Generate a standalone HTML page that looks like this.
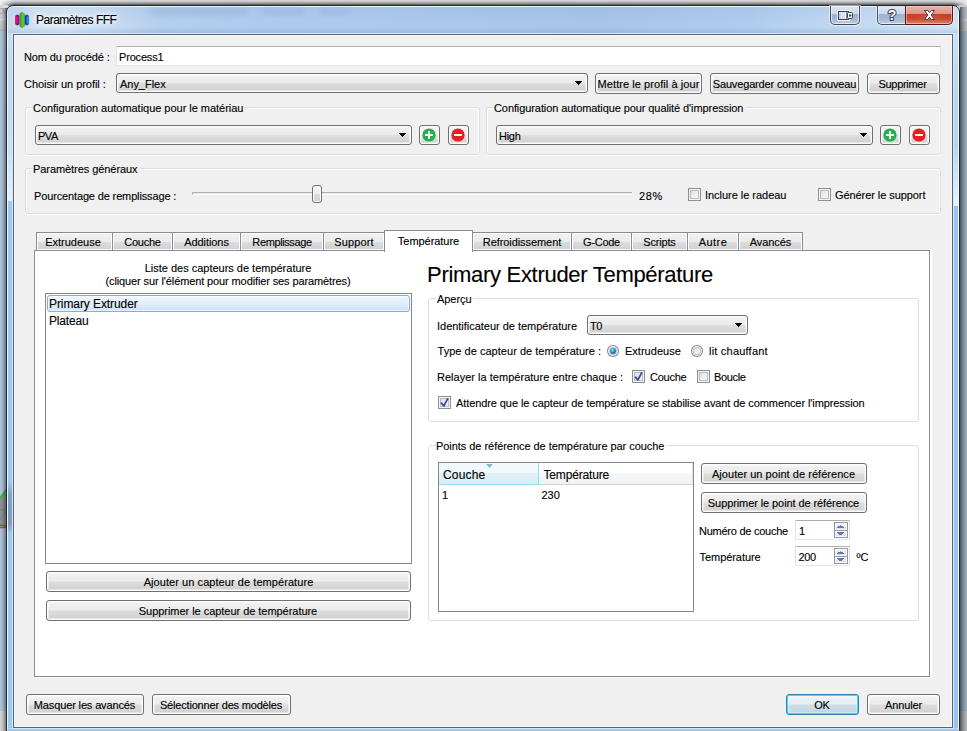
<!DOCTYPE html>
<html lang="fr"><head><meta charset="utf-8"><title>Paramètres FFF</title>
<style>
html,body{margin:0;padding:0;}
body{width:967px;height:731px;overflow:hidden;position:relative;background:#d6d6d6;font-family:"Liberation Sans",sans-serif;}
div,span,svg{position:absolute;}
.t{white-space:nowrap;font-family:"Liberation Sans",sans-serif;-webkit-text-stroke:0.12px #000;}
</style></head><body>
<div style="left:0px;top:0px;width:967px;height:6px;background:linear-gradient(#d9d9d9 0px,#d0d0d0 1px,#bbbbbb 2px,#9d9d9f 3px,#7a7b7f 4px,#55575c 5px);"></div>
<div style="left:0px;top:0px;width:14px;height:6px;background:linear-gradient(90deg,#f4f4f4 0%,rgba(244,244,244,0) 100%);"></div>
<div style="left:953px;top:0px;width:14px;height:6px;background:linear-gradient(270deg,#ececec 0%,rgba(236,236,236,0) 100%);"></div>
<div style="left:0px;top:5px;width:8px;height:15px;background:linear-gradient(#d6d8e2,#cccedb);"></div>
<div style="left:0px;top:19px;width:8px;height:13px;background:linear-gradient(#e4e4e4 0,#cacaca 2px,#bebebe 11px,#98a4b0 12px,#98a4b0 13px);"></div>
<div style="left:0px;top:31px;width:8px;height:681px;background:#b0c6d8;"></div>
<svg style="left:0;top:480px" width="7" height="52" viewBox="0 0 7 52"><path d="M0 18L7 6V48H0z" fill="#8e9296"/><path d="M0 30H7M0 40L7 28" stroke="#7b7f84" stroke-width=".8" fill="none"/><path d="M-1 19L7 9" stroke="#1fcb2c" stroke-width="1.6"/><ellipse cx="1.5" cy="46.5" rx="4" ry="1.3" fill="none" stroke="#e0262c" stroke-width="1.1"/></svg>
<div style="left:0px;top:711px;width:8px;height:20px;background:#d4d4d4;"></div>
<span class="t" style="left:-2px;top:4px;font-size:11px;line-height:13px;color:#b9a680;-webkit-text-stroke:0;">pa</span>
<div style="left:0px;top:8px;width:7px;height:723px;background:linear-gradient(90deg,rgba(30,40,50,0) 0%,rgba(30,40,50,.08) 30%,rgba(30,40,50,.3) 60%,rgba(30,40,50,.62) 100%);"></div>
<div style="left:959px;top:5px;width:8px;height:15px;background:#c9cbd5;"></div>
<div style="left:959px;top:19px;width:8px;height:13px;background:linear-gradient(#e6e6e6 0,#cccccc 3px,#c8c8c8 100%);"></div>
<div style="left:959px;top:31px;width:8px;height:680px;background:#a8bbcb;"></div>
<div style="left:959px;top:711px;width:8px;height:20px;background:#c4c4c4;"></div>
<div style="left:960px;top:7px;width:7px;height:724px;background:linear-gradient(90deg,rgba(20,30,40,.68) 0%,rgba(20,30,40,.42) 30%,rgba(20,30,40,.22) 65%,rgba(20,30,40,.1) 100%);"></div>
<div style="left:6px;top:5px;width:954px;height:731px;box-sizing:border-box;border:1px solid #1f2731;border-radius:7px;background:#9fc9ee;box-shadow:inset 0 0 0 1px #effaff;"></div>
<div style="left:8px;top:7px;width:950px;height:26px;border-radius:5px 5px 0 0;background:linear-gradient(90deg,#c3d5ea 0%,#cfdef0 2.5%,#d6e4f3 6%,#c2d7f0 11%,#aecaeb 16%,#a8c7eb 26%,#a4c4e8 45%,#a0c0e4 62%,#a9c8eb 78%,#bcd4ef 88%,#cfe0f3 100%);"></div>
<div style="left:8px;top:7px;width:950px;height:26px;border-radius:5px 5px 0 0;background:linear-gradient(rgba(150,180,220,.10) 0%,rgba(255,255,255,.06) 45%,rgba(255,255,255,.10) 75%,rgba(110,160,215,.22) 100%);"></div>
<div style="left:8px;top:33px;width:5px;height:168px;background:linear-gradient(#c9dbef 0%,#c0d8f2 35%,#cbdff5 70%,#e6f0fa 100%);"></div>
<div style="left:953px;top:33px;width:5px;height:173px;background:linear-gradient(#cfe0f3 0%,#b9d6f2 35%,#b6d5f3 65%,#e9f2fb 100%);"></div>
<div style="left:953px;top:206px;width:5px;height:522px;background:#99c5eb;"></div>
<div style="left:8px;top:482px;width:4px;height:52px;background:linear-gradient(rgba(110,130,155,0) 0%,rgba(110,130,155,.55) 25%,rgba(110,130,155,.6) 80%,rgba(110,130,155,0) 100%);"></div>
<div style="left:150px;top:9px;width:96px;height:6px;background:rgba(110,140,185,.20);filter:blur(2.5px);"></div>
<div style="left:262px;top:9px;width:40px;height:6px;background:rgba(110,140,185,.18);filter:blur(2.5px);"></div>
<div style="left:320px;top:9px;width:28px;height:6px;background:rgba(110,140,185,.16);filter:blur(2.5px);"></div>
<div style="left:8px;top:728px;width:950px;height:3px;background:linear-gradient(#d5e7fa 0px,#a2c5e8 1px);"></div>
<div style="left:12px;top:33px;width:942px;height:696px;box-sizing:border-box;border:1px solid #d6e9fc;"></div>
<div style="left:13px;top:34px;width:940px;height:694px;box-sizing:border-box;border:1px solid #526477;background:#f0f0f0;box-shadow:inset 0 0 0 1px #f9f9f9;"></div>
<svg style="left:14px;top:11px" width="16" height="18" viewBox="0 0 16 18">
<defs>
<linearGradient id="gp" x1="0" x2="1" y1="0" y2="0"><stop offset="0" stop-color="#d4127a"/><stop offset=".3" stop-color="#f6067a"/><stop offset=".7" stop-color="#a3158a"/><stop offset="1" stop-color="#4f1c8e"/></linearGradient>
<linearGradient id="gg" x1="0" x2="1" y1="0" y2="0"><stop offset="0" stop-color="#2b9c3a"/><stop offset=".3" stop-color="#45ae34"/><stop offset=".68" stop-color="#7cc52a"/><stop offset="1" stop-color="#2a9a3c"/></linearGradient>
<linearGradient id="gb" x1="0" x2="1" y1="0" y2="0"><stop offset="0" stop-color="#2c1c98"/><stop offset=".3" stop-color="#1f3fb8"/><stop offset=".72" stop-color="#1aa6f2"/><stop offset="1" stop-color="#2a74d4"/></linearGradient>
<linearGradient id="gv" x1="0" x2="0" y1="0" y2="1"><stop offset="0" stop-color="#201060" stop-opacity=".45"/><stop offset=".25" stop-color="#201060" stop-opacity="0"/><stop offset=".75" stop-color="#201060" stop-opacity="0"/><stop offset="1" stop-color="#201060" stop-opacity=".45"/></linearGradient>
</defs>
<path d="M3.25 3.3L4.3 4.3H2.2ZM3.25 14.7L4.3 13.7H2.2ZM12.85 3.3L13.9 4.3H11.8ZM12.85 14.7L13.9 13.7H11.8Z" fill="#5a2090"/>
<rect x="1.1" y="4" width="4.5" height="10" rx="1.7" fill="url(#gp)"/><rect x="1.1" y="4" width="4.5" height="10" rx="1.7" fill="url(#gv)"/>
<rect x="10.6" y="4" width="4.5" height="10" rx="1.7" fill="url(#gb)"/><rect x="10.6" y="4" width="4.5" height="10" rx="1.7" fill="url(#gv)"/>
<path d="M8.1 0.9L9.4 2.1H6.8ZM8.1 17.1L9.4 15.9H6.8Z" fill="#2f9f3a"/>
<rect x="5.4" y="1.6" width="5.4" height="14.8" rx="2.2" fill="url(#gg)"/>
</svg>
<span id="t1" class="t" style="left:36px;top:13px;font-size:12px;line-height:14px;color:#000;letter-spacing:-0.497px;text-shadow:0 0 4px #fff,0 0 6px #fff,0 0 8px rgba(255,255,255,.9);">Paramètres FFF</span>
<div style="left:830px;top:6px;width:30px;height:19px;box-sizing:border-box;border:1px solid #3f4b5b;border-top:none;box-shadow:0 0 0 1px rgba(255,255,255,.55), inset 0 0 0 1px rgba(255,255,255,.6);border-radius:0 0 5px 5px;background:linear-gradient(#dde7f3 0%,#c9d7e9 46%,#9db2cf 47%,#a6bad6 75%,#bccfe6 100%);"></div>
<svg style="left:837px;top:10px" width="17" height="11" viewBox="0 0 17 11">
<rect x=".5" y=".5" width="12" height="10" fill="none" stroke="#fff" stroke-opacity=".8"/>
<rect x="1.5" y="1.5" width="10" height="8" fill="#c9d5e6" stroke="#3c3f55"/>
<path d="M4.5 2v7M6.5 2v7" stroke="#eef3f9"/><path d="M8.5 2v7" stroke="#fff"/><path d="M9.5 2v7" stroke="#7d879c"/>
<rect x="10.5" y="2.5" width="5" height="6" rx="1" fill="#fff" stroke="#3c3f55"/><rect x="12" y="4.5" width="2.4" height="2" fill="#3c3f55"/></svg>
<div style="left:877px;top:6px;width:29px;height:19px;box-sizing:border-box;border:1px solid #3f4b5b;border-top:none;border-right:none;box-shadow:-1px 0 0 0 rgba(255,255,255,.55),0 1px 0 0 rgba(255,255,255,.55), inset 1px 0 0 0 rgba(255,255,255,.6), inset 0 -1px 0 0 rgba(255,255,255,.6);border-radius:0 0 0 5px;background:linear-gradient(#dde7f3 0%,#c9d7e9 46%,#9db2cf 47%,#a6bad6 75%,#bccfe6 100%);"></div>
<svg style="left:882px;top:6px" width="20" height="18" viewBox="0 0 20 18"><text x="10" y="14" text-anchor="middle" font-family="Liberation Sans, sans-serif" font-weight="bold" font-size="14" fill="#fff" stroke="#3a3f55" stroke-width="2" stroke-linejoin="round" paint-order="stroke">?</text></svg>
<div style="left:905px;top:6px;width:48px;height:19px;box-sizing:border-box;border:1px solid #5c160d;border-top:none;border-radius:0 0 5px 0;box-shadow:0 1px 0 0 rgba(255,255,255,.5),1px 0 0 0 rgba(255,255,255,.5), inset 0 0 0 1px rgba(255,210,200,.55);background:linear-gradient(#efb3a8 0%,#de9083 46%,#c23f2a 47%,#c8442e 70%,#da8a6b 100%);"></div>
<div style="left:912px;top:15px;width:34px;height:8px;background:radial-gradient(ellipse at 50% 20%,rgba(235,95,60,.55) 0%,rgba(235,95,60,0) 70%);"></div>
<svg style="left:923px;top:9px" width="13" height="12" viewBox="0 0 13 12"><path d="M1.5 1.5H4.7L6.5 3.7L8.3 1.5H11.5L8.2 6L11.5 10.5H8.3L6.5 8.3L4.7 10.5H1.5L4.8 6Z" fill="#fff" stroke="#3c3f55" stroke-width="1" stroke-linejoin="round"/></svg>
<span id="t2" class="t" style="left:24px;top:51px;font-size:11px;line-height:13px;color:#000;letter-spacing:-0.115px;">Nom du procédé :</span>
<div style="left:116px;top:46px;width:825px;height:20px;box-sizing:border-box;border-radius:1px;border:1px solid #e3e9ef;border-top-color:#abadb3;border-left-color:#e2e3ea;border-right-color:#dbdfe6;background:#fff;"></div>
<span id="t3" class="t" style="left:119px;top:51px;font-size:11px;line-height:13px;color:#000;letter-spacing:-0.182px;">Process1</span>
<span id="t4" class="t" style="left:24px;top:78px;font-size:11px;line-height:13px;color:#000;letter-spacing:-0.039px;">Choisir un profil :</span>
<div style="left:116px;top:73px;width:472px;height:20px;box-sizing:border-box;border:1px solid #707070;border-radius:3px;box-shadow:inset 0 0 0 1px #fcfcfc, inset 0 0 0 2px rgba(255,255,255,.45);background:linear-gradient(#f2f2f2 0%,#ebebeb 48%,#dddddd 52%,#cfcfcf 100%);"></div>
<svg style="left:575px;top:81px" width="7" height="4" viewBox="0 0 7 4" shape-rendering="crispEdges"><path d="M0 0h7v1h-7zM1 1h5v1h-5zM2 2h3v1h-3zM3 3h1v1h-1z" fill="#000"/></svg>
<span id="t5" class="t" style="left:120px;top:78px;font-size:11px;line-height:13px;color:#000;letter-spacing:-0.032px;">Any_Flex</span>
<div style="left:595px;top:73px;width:107px;height:21px;box-sizing:border-box;border:1px solid #707070;border-radius:3px;box-shadow:inset 0 0 0 1px #fcfcfc, inset 0 0 0 2px rgba(255,255,255,.45);background:linear-gradient(#f2f2f2 0%,#ebebeb 48%,#dddddd 52%,#cfcfcf 100%);"></div>
<span id="t6" class="t" style="left:648.5px;transform:translateX(-50%);top:78px;font-size:11px;line-height:13px;color:#000;letter-spacing:0.067px;">Mettre le profil à jour</span>
<div style="left:710px;top:73px;width:149px;height:21px;box-sizing:border-box;border:1px solid #707070;border-radius:3px;box-shadow:inset 0 0 0 1px #fcfcfc, inset 0 0 0 2px rgba(255,255,255,.45);background:linear-gradient(#f2f2f2 0%,#ebebeb 48%,#dddddd 52%,#cfcfcf 100%);"></div>
<span id="t7" class="t" style="left:784.5px;transform:translateX(-50%);top:78px;font-size:11px;line-height:13px;color:#000;letter-spacing:-0.155px;">Sauvegarder comme nouveau</span>
<div style="left:867px;top:73px;width:73px;height:21px;box-sizing:border-box;border:1px solid #707070;border-radius:3px;box-shadow:inset 0 0 0 1px #fcfcfc, inset 0 0 0 2px rgba(255,255,255,.45);background:linear-gradient(#f2f2f2 0%,#ebebeb 48%,#dddddd 52%,#cfcfcf 100%);"></div>
<span id="t8" class="t" style="left:902.5px;transform:translateX(-50%);top:78px;font-size:11px;line-height:13px;color:#000;letter-spacing:-0.294px;">Supprimer</span>
<div style="left:25px;top:107px;width:455px;height:48px;box-sizing:border-box;border:1px solid #d5dfe5;border-radius:3px;box-shadow:inset 1px 1px 0 0 #fff, inset -1px 0 0 0 #fff, 0 1px 0 0 #fff;"></div>
<div style="left:33px;top:107px;width:212px;height:2px;background:#f0f0f0;"></div>
<span id="t9" class="t" style="left:33px;top:102px;font-size:11px;line-height:13px;color:#000;letter-spacing:-0.028px;">Configuration automatique pour le matériau</span>
<div style="left:35px;top:125px;width:377px;height:20px;box-sizing:border-box;border:1px solid #707070;border-radius:3px;box-shadow:inset 0 0 0 1px #fcfcfc, inset 0 0 0 2px rgba(255,255,255,.45);background:linear-gradient(#f2f2f2 0%,#ebebeb 48%,#dddddd 52%,#cfcfcf 100%);"></div>
<svg style="left:399px;top:133px" width="7" height="4" viewBox="0 0 7 4" shape-rendering="crispEdges"><path d="M0 0h7v1h-7zM1 1h5v1h-5zM2 2h3v1h-3zM3 3h1v1h-1z" fill="#000"/></svg>
<span id="t10" class="t" style="left:38px;top:130px;font-size:11px;line-height:13px;color:#000;letter-spacing:-0.468px;">PVA</span>
<div style="left:419px;top:125px;width:21px;height:20px;box-sizing:border-box;border:1px solid #707070;border-radius:3px;box-shadow:inset 0 0 0 1px #fcfcfc, inset 0 0 0 2px rgba(255,255,255,.45);background:linear-gradient(#f2f2f2 0%,#ebebeb 48%,#dddddd 52%,#cfcfcf 100%);"></div>
<svg style="left:422px;top:128px" width="14" height="14" viewBox="0 0 14 14"><circle cx="7" cy="7" r="6.6" fill="#22b14c"/><path d="M6 3h2v3h3v2h-3v3h-2v-3h-3v-2h3z" fill="#fff"/></svg>
<div style="left:448px;top:125px;width:21px;height:20px;box-sizing:border-box;border:1px solid #707070;border-radius:3px;box-shadow:inset 0 0 0 1px #fcfcfc, inset 0 0 0 2px rgba(255,255,255,.45);background:linear-gradient(#f2f2f2 0%,#ebebeb 48%,#dddddd 52%,#cfcfcf 100%);"></div>
<svg style="left:451px;top:128px" width="14" height="14" viewBox="0 0 14 14"><circle cx="7" cy="7" r="6.6" fill="#ed1c24"/><path d="M3 6h8v2h-8z" fill="#fff"/></svg>
<div style="left:486px;top:107px;width:455px;height:48px;box-sizing:border-box;border:1px solid #d5dfe5;border-radius:3px;box-shadow:inset 1px 1px 0 0 #fff, inset -1px 0 0 0 #fff, 0 1px 0 0 #fff;"></div>
<div style="left:494px;top:107px;width:252px;height:2px;background:#f0f0f0;"></div>
<span id="t11" class="t" style="left:494px;top:102px;font-size:11px;line-height:13px;color:#000;letter-spacing:-0.091px;">Configuration automatique pour qualité d'impression</span>
<div style="left:496px;top:125px;width:377px;height:20px;box-sizing:border-box;border:1px solid #707070;border-radius:3px;box-shadow:inset 0 0 0 1px #fcfcfc, inset 0 0 0 2px rgba(255,255,255,.45);background:linear-gradient(#f2f2f2 0%,#ebebeb 48%,#dddddd 52%,#cfcfcf 100%);"></div>
<svg style="left:860px;top:133px" width="7" height="4" viewBox="0 0 7 4" shape-rendering="crispEdges"><path d="M0 0h7v1h-7zM1 1h5v1h-5zM2 2h3v1h-3zM3 3h1v1h-1z" fill="#000"/></svg>
<span id="t12" class="t" style="left:499px;top:130px;font-size:11px;line-height:13px;color:#000;letter-spacing:-0.281px;">High</span>
<div style="left:880px;top:125px;width:21px;height:20px;box-sizing:border-box;border:1px solid #707070;border-radius:3px;box-shadow:inset 0 0 0 1px #fcfcfc, inset 0 0 0 2px rgba(255,255,255,.45);background:linear-gradient(#f2f2f2 0%,#ebebeb 48%,#dddddd 52%,#cfcfcf 100%);"></div>
<svg style="left:883px;top:128px" width="14" height="14" viewBox="0 0 14 14"><circle cx="7" cy="7" r="6.6" fill="#22b14c"/><path d="M6 3h2v3h3v2h-3v3h-2v-3h-3v-2h3z" fill="#fff"/></svg>
<div style="left:909px;top:125px;width:21px;height:20px;box-sizing:border-box;border:1px solid #707070;border-radius:3px;box-shadow:inset 0 0 0 1px #fcfcfc, inset 0 0 0 2px rgba(255,255,255,.45);background:linear-gradient(#f2f2f2 0%,#ebebeb 48%,#dddddd 52%,#cfcfcf 100%);"></div>
<svg style="left:912px;top:128px" width="14" height="14" viewBox="0 0 14 14"><circle cx="7" cy="7" r="6.6" fill="#ed1c24"/><path d="M3 6h8v2h-8z" fill="#fff"/></svg>
<div style="left:25px;top:168px;width:916px;height:46px;box-sizing:border-box;border:1px solid #d5dfe5;border-radius:3px;box-shadow:inset 1px 1px 0 0 #fff, inset -1px 0 0 0 #fff, 0 1px 0 0 #fff;"></div>
<div style="left:33px;top:168px;width:107px;height:2px;background:#f0f0f0;"></div>
<span id="t13" class="t" style="left:33px;top:163px;font-size:11px;line-height:13px;color:#000;letter-spacing:-0.067px;">Paramètres généraux</span>
<span id="t14" class="t" style="left:34px;top:190px;font-size:11px;line-height:13px;color:#000;letter-spacing:-0.141px;">Pourcentage de remplissage :</span>
<div style="left:192px;top:192px;width:440px;height:3px;box-sizing:border-box;background:#e7eaea;border-top:1px solid #b0b0b0;border-left:1px solid #b0b0b0;border-bottom:1px solid #fcfcfc;"></div>
<div style="left:312px;top:185px;width:10px;height:18px;box-sizing:border-box;border:1px solid #707070;border-radius:3px;box-shadow:inset 0 0 0 1px #fcfcfc;background:linear-gradient(#f4f4f4 0%,#efefef 48%,#dcdcdc 52%,#d2d2d2 100%);"></div>
<span id="t15" class="t" style="left:639px;top:190px;font-size:11px;line-height:13px;color:#000;letter-spacing:0.59px;">28%</span>
<div style="left:688px;top:188px;width:13px;height:13px;box-sizing:border-box;border:1px solid #8e8f8f;background:#f4f4f4;box-shadow:inset 0 0 0 1px #f4f4f4, inset 0 0 0 2px #b9bcc0;background:linear-gradient(135deg,#d6d9dc 0%,#eceef0 50%,#fbfbfc 100%);"></div>
<span id="t16" class="t" style="left:705px;top:189px;font-size:11px;line-height:13px;color:#000;letter-spacing:-0.033px;">Inclure le radeau</span>
<div style="left:818px;top:188px;width:13px;height:13px;box-sizing:border-box;border:1px solid #8e8f8f;background:#f4f4f4;box-shadow:inset 0 0 0 1px #f4f4f4, inset 0 0 0 2px #b9bcc0;background:linear-gradient(135deg,#d6d9dc 0%,#eceef0 50%,#fbfbfc 100%);"></div>
<span id="t17" class="t" style="left:835px;top:189px;font-size:11px;line-height:13px;color:#000;letter-spacing:-0.073px;">Générer le support</span>
<div style="left:34px;top:250px;width:896px;height:427px;box-sizing:border-box;border:1px solid #898c95;background:#fff;"></div>
<div style="left:930px;top:250px;width:2px;height:428px;background:#fff;"></div>
<div style="left:35px;top:677px;width:897px;height:1px;background:#fff;"></div>
<div style="left:36px;top:232px;width:77px;height:19px;box-sizing:border-box;border:1px solid #898c95;box-shadow:inset 0 0 0 1px #fcfcfc;background:linear-gradient(#f2f2f2 0%,#ebebeb 50%,#dddddd 53%,#cfcfcf 100%);"></div>
<span id="t18" class="t" style="left:73.0px;transform:translateX(-50%);top:236px;font-size:11px;line-height:13px;color:#000;letter-spacing:-0.006px;">Extrudeuse</span>
<div style="left:112px;top:232px;width:61px;height:19px;box-sizing:border-box;border:1px solid #898c95;box-shadow:inset 0 0 0 1px #fcfcfc;background:linear-gradient(#f2f2f2 0%,#ebebeb 50%,#dddddd 53%,#cfcfcf 100%);"></div>
<span id="t19" class="t" style="left:142.5px;transform:translateX(-50%);top:236px;font-size:11px;line-height:13px;color:#000;letter-spacing:-0.237px;">Couche</span>
<div style="left:172px;top:232px;width:69px;height:19px;box-sizing:border-box;border:1px solid #898c95;box-shadow:inset 0 0 0 1px #fcfcfc;background:linear-gradient(#f2f2f2 0%,#ebebeb 50%,#dddddd 53%,#cfcfcf 100%);"></div>
<span id="t20" class="t" style="left:206.5px;transform:translateX(-50%);top:236px;font-size:11px;line-height:13px;color:#000;letter-spacing:-0.063px;">Additions</span>
<div style="left:240px;top:232px;width:84px;height:19px;box-sizing:border-box;border:1px solid #898c95;box-shadow:inset 0 0 0 1px #fcfcfc;background:linear-gradient(#f2f2f2 0%,#ebebeb 50%,#dddddd 53%,#cfcfcf 100%);"></div>
<span id="t21" class="t" style="left:282.0px;transform:translateX(-50%);top:236px;font-size:11px;line-height:13px;color:#000;letter-spacing:-0.39px;">Remplissage</span>
<div style="left:323px;top:232px;width:62px;height:19px;box-sizing:border-box;border:1px solid #898c95;box-shadow:inset 0 0 0 1px #fcfcfc;background:linear-gradient(#f2f2f2 0%,#ebebeb 50%,#dddddd 53%,#cfcfcf 100%);"></div>
<span id="t22" class="t" style="left:354.0px;transform:translateX(-50%);top:236px;font-size:11px;line-height:13px;color:#000;letter-spacing:0.153px;">Support</span>
<div style="left:472px;top:232px;width:100px;height:19px;box-sizing:border-box;border:1px solid #898c95;box-shadow:inset 0 0 0 1px #fcfcfc;background:linear-gradient(#f2f2f2 0%,#ebebeb 50%,#dddddd 53%,#cfcfcf 100%);"></div>
<span id="t23" class="t" style="left:522.0px;transform:translateX(-50%);top:236px;font-size:11px;line-height:13px;color:#000;letter-spacing:-0.072px;">Refroidissement</span>
<div style="left:571px;top:232px;width:61px;height:19px;box-sizing:border-box;border:1px solid #898c95;box-shadow:inset 0 0 0 1px #fcfcfc;background:linear-gradient(#f2f2f2 0%,#ebebeb 50%,#dddddd 53%,#cfcfcf 100%);"></div>
<span id="t24" class="t" style="left:601.5px;transform:translateX(-50%);top:236px;font-size:11px;line-height:13px;color:#000;letter-spacing:-0.289px;">G-Code</span>
<div style="left:631px;top:232px;width:57px;height:19px;box-sizing:border-box;border:1px solid #898c95;box-shadow:inset 0 0 0 1px #fcfcfc;background:linear-gradient(#f2f2f2 0%,#ebebeb 50%,#dddddd 53%,#cfcfcf 100%);"></div>
<span id="t25" class="t" style="left:659.5px;transform:translateX(-50%);top:236px;font-size:11px;line-height:13px;color:#000;letter-spacing:-0.175px;">Scripts</span>
<div style="left:687px;top:232px;width:52px;height:19px;box-sizing:border-box;border:1px solid #898c95;box-shadow:inset 0 0 0 1px #fcfcfc;background:linear-gradient(#f2f2f2 0%,#ebebeb 50%,#dddddd 53%,#cfcfcf 100%);"></div>
<span id="t26" class="t" style="left:713.0px;transform:translateX(-50%);top:236px;font-size:11px;line-height:13px;color:#000;letter-spacing:0.401px;">Autre</span>
<div style="left:738px;top:232px;width:65px;height:19px;box-sizing:border-box;border:1px solid #898c95;box-shadow:inset 0 0 0 1px #fcfcfc;background:linear-gradient(#f2f2f2 0%,#ebebeb 50%,#dddddd 53%,#cfcfcf 100%);"></div>
<span id="t27" class="t" style="left:770.5px;transform:translateX(-50%);top:236px;font-size:11px;line-height:13px;color:#000;letter-spacing:-0.086px;">Avancés</span>
<div style="left:384px;top:230px;width:89px;height:22px;box-sizing:border-box;border:1px solid #898c95;border-bottom:none;background:#fff;"></div>
<span id="t28" class="t" style="left:428.5px;transform:translateX(-50%);top:235px;font-size:11px;line-height:13px;color:#000;letter-spacing:-0.042px;">Température</span>
<span id="t29" class="t" style="left:228px;transform:translateX(-50%);top:262px;font-size:11px;line-height:13px;color:#000;letter-spacing:-0.01px;">Liste des capteurs de température</span>
<span id="t30" class="t" style="left:228px;transform:translateX(-50%);top:275px;font-size:11px;line-height:13px;color:#000;letter-spacing:-0.114px;">(cliquer sur l'élément pour modifier ses paramètres)</span>
<div style="left:45px;top:293px;width:367px;height:271px;box-sizing:border-box;border:1px solid #828790;background:#fff;"></div>
<div style="left:47px;top:295px;width:363px;height:17px;box-sizing:border-box;border:1px solid #84acdd;border-radius:3px;box-shadow:inset 0 0 0 1px rgba(255,255,255,.6);background:linear-gradient(#f1f7fe,#cfe3fc);"></div>
<span id="t31" class="t" style="left:49px;top:297px;font-size:12px;line-height:14px;color:#000;letter-spacing:-0.083px;">Primary Extruder</span>
<span id="t32" class="t" style="left:49px;top:314px;font-size:12px;line-height:14px;color:#000;letter-spacing:-0.172px;">Plateau</span>
<div style="left:46px;top:571px;width:365px;height:21px;box-sizing:border-box;border:1px solid #707070;border-radius:3px;box-shadow:inset 0 0 0 1px #fcfcfc, inset 0 0 0 2px rgba(255,255,255,.45);background:linear-gradient(#f2f2f2 0%,#ebebeb 48%,#dddddd 52%,#cfcfcf 100%);"></div>
<span id="t33" class="t" style="left:228.5px;transform:translateX(-50%);top:576px;font-size:11px;line-height:13px;color:#000;letter-spacing:0.065px;">Ajouter un capteur de température</span>
<div style="left:46px;top:600px;width:365px;height:21px;box-sizing:border-box;border:1px solid #707070;border-radius:3px;box-shadow:inset 0 0 0 1px #fcfcfc, inset 0 0 0 2px rgba(255,255,255,.45);background:linear-gradient(#f2f2f2 0%,#ebebeb 48%,#dddddd 52%,#cfcfcf 100%);"></div>
<span id="t34" class="t" style="left:228px;transform:translateX(-50%);top:605px;font-size:11px;line-height:13px;color:#000;letter-spacing:-0.039px;">Supprimer le capteur de température</span>
<span id="t35" class="t" style="left:427px;top:262px;font-size:22px;line-height:25px;color:#000;letter-spacing:-0.295px;">Primary Extruder Température</span>
<div style="left:428px;top:298px;width:491px;height:124px;box-sizing:border-box;border:1px solid #d5dfe5;border-radius:3px;box-shadow:inset 1px 1px 0 0 #fff, inset -1px 0 0 0 #fff, 0 1px 0 0 #fff;"></div>
<div style="left:436px;top:298px;width:37px;height:2px;background:#fff;"></div>
<span id="t36" class="t" style="left:437px;top:293px;font-size:11px;line-height:13px;color:#000;letter-spacing:-0.06px;">Aperçu</span>
<span id="t37" class="t" style="left:437px;top:320px;font-size:11px;line-height:13px;color:#000;letter-spacing:-0.022px;">Identificateur de température</span>
<div style="left:587px;top:315px;width:161px;height:20px;box-sizing:border-box;border:1px solid #707070;border-radius:3px;box-shadow:inset 0 0 0 1px #fcfcfc, inset 0 0 0 2px rgba(255,255,255,.45);background:linear-gradient(#f2f2f2 0%,#ebebeb 48%,#dddddd 52%,#cfcfcf 100%);"></div>
<svg style="left:735px;top:323px" width="7" height="4" viewBox="0 0 7 4" shape-rendering="crispEdges"><path d="M0 0h7v1h-7zM1 1h5v1h-5zM2 2h3v1h-3zM3 3h1v1h-1z" fill="#000"/></svg>
<span id="t38" class="t" style="left:590px;top:320px;font-size:11px;line-height:13px;color:#000;letter-spacing:-0.422px;">T0</span>
<span id="t39" class="t" style="left:437.5px;top:345px;font-size:11px;line-height:13px;color:#000;letter-spacing:0.029px;">Type de capteur de température :</span>
<div style="left:607px;top:345px;width:12px;height:12px;border-radius:50%;box-shadow:inset 0 0 0 1px #8e8f8f, inset 0 0 0 2px #f0f0f0, inset 0 0 0 3px #c0c4c8;background:linear-gradient(135deg,#d6d9dc 0%,#eceef0 50%,#fbfbfc 100%);"><div style="left:3px;top:3px;width:6px;height:6px;border-radius:50%;background:radial-gradient(circle at 40% 35%,#a8e6fb 0%,#2aa2e2 35%,#15629f 70%,#0c3a6b 100%);"></div></div>
<span id="t40" class="t" style="left:625px;top:345px;font-size:11px;line-height:13px;color:#000;letter-spacing:0.014px;">Extrudeuse</span>
<div style="left:691px;top:345px;width:12px;height:12px;border-radius:50%;box-shadow:inset 0 0 0 1px #8e8f8f, inset 0 0 0 2px #f0f0f0, inset 0 0 0 3px #c0c4c8;background:linear-gradient(135deg,#d6d9dc 0%,#eceef0 50%,#fbfbfc 100%);"></div>
<span id="t41" class="t" style="left:709px;top:345px;font-size:11px;line-height:13px;color:#000;letter-spacing:0.211px;">lit chauffant</span>
<span id="t42" class="t" style="left:437px;top:371px;font-size:11px;line-height:13px;color:#000;letter-spacing:0.019px;">Relayer la température entre chaque :</span>
<div style="left:632px;top:370px;width:13px;height:13px;box-sizing:border-box;border:1px solid #8e8f8f;background:#f4f4f4;box-shadow:inset 0 0 0 1px #f4f4f4, inset 0 0 0 2px #b9bcc0;background:linear-gradient(135deg,#d6d9dc 0%,#eceef0 50%,#fbfbfc 100%);"><svg width="13" height="13" viewBox="0 0 13 13" style="left:-1px;top:-1px"><path d="M3.5 7.1 L5.9 9.9 L9.6 2.9" fill="none" stroke="#3a4c9a" stroke-width="1.8" stroke-linecap="round" stroke-linejoin="round"/></svg></div>
<span id="t43" class="t" style="left:650px;top:371px;font-size:11px;line-height:13px;color:#000;letter-spacing:-0.254px;">Couche</span>
<div style="left:697px;top:370px;width:13px;height:13px;box-sizing:border-box;border:1px solid #8e8f8f;background:#f4f4f4;box-shadow:inset 0 0 0 1px #f4f4f4, inset 0 0 0 2px #b9bcc0;background:linear-gradient(135deg,#d6d9dc 0%,#eceef0 50%,#fbfbfc 100%);"></div>
<span id="t44" class="t" style="left:714px;top:371px;font-size:11px;line-height:13px;color:#000;letter-spacing:-0.357px;">Boucle</span>
<div style="left:438px;top:396px;width:13px;height:13px;box-sizing:border-box;border:1px solid #8e8f8f;background:#f4f4f4;box-shadow:inset 0 0 0 1px #f4f4f4, inset 0 0 0 2px #b9bcc0;background:linear-gradient(135deg,#d6d9dc 0%,#eceef0 50%,#fbfbfc 100%);"><svg width="13" height="13" viewBox="0 0 13 13" style="left:-1px;top:-1px"><path d="M3.5 7.1 L5.9 9.9 L9.6 2.9" fill="none" stroke="#3a4c9a" stroke-width="1.8" stroke-linecap="round" stroke-linejoin="round"/></svg></div>
<span id="t45" class="t" style="left:456px;top:397px;font-size:11px;line-height:13px;color:#000;letter-spacing:-0.09px;">Attendre que le capteur de température se stabilise avant de commencer l'impression</span>
<div style="left:428px;top:445px;width:491px;height:176px;box-sizing:border-box;border:1px solid #d5dfe5;border-radius:3px;box-shadow:inset 1px 1px 0 0 #fff, inset -1px 0 0 0 #fff, 0 1px 0 0 #fff;"></div>
<div style="left:436px;top:445px;width:231px;height:2px;background:#fff;"></div>
<span id="t46" class="t" style="left:436px;top:440px;font-size:11px;line-height:13px;color:#000;letter-spacing:-0.047px;">Points de référence de température par couche</span>
<div style="left:438px;top:462px;width:256px;height:150px;box-sizing:border-box;border:1px solid #828790;background:#fff;"></div>
<div style="left:439px;top:463px;width:254px;height:21px;background:linear-gradient(#ffffff 0%,#ffffff 45%,#f7f8fa 50%,#f1f2f4 100%);border-bottom:1px solid #d5d5d5;"></div>
<div style="left:439px;top:463px;width:100px;height:22px;box-sizing:border-box;border-right:1px solid #96d9f9;border-bottom:1px solid #96d9f9;background:linear-gradient(#f2f9fc 0%,#f2f9fc 45%,#e1f1f9 50%,#d8ecf6 100%);"></div>
<svg style="left:486px;top:464px" width="7" height="4" viewBox="0 0 7 4"><path d="M0 0h7L3.5 4z" fill="#86b7d5"/></svg>
<div style="left:692px;top:463px;width:1px;height:20px;background:#e0e3e8;"></div>
<span id="t47" class="t" style="left:443px;top:468px;font-size:12px;line-height:14px;color:#000;letter-spacing:0.171px;">Couche</span>
<span id="t48" class="t" style="left:543.5px;top:468px;font-size:12px;line-height:14px;color:#000;letter-spacing:-0.161px;">Température</span>
<span id="t49" class="t" style="left:442px;top:489px;font-size:11px;line-height:13px;color:#000;letter-spacing:0px;">1</span>
<span id="t50" class="t" style="left:541.5px;top:489px;font-size:11px;line-height:13px;color:#000;letter-spacing:-0.02px;">230</span>
<div style="left:701px;top:463px;width:166px;height:21px;box-sizing:border-box;border:1px solid #707070;border-radius:3px;box-shadow:inset 0 0 0 1px #fcfcfc, inset 0 0 0 2px rgba(255,255,255,.45);background:linear-gradient(#f2f2f2 0%,#ebebeb 48%,#dddddd 52%,#cfcfcf 100%);"></div>
<span id="t51" class="t" style="left:783.5px;transform:translateX(-50%);top:468px;font-size:11px;line-height:13px;color:#000;letter-spacing:0.042px;">Ajouter un point de référence</span>
<div style="left:701px;top:492px;width:166px;height:21px;box-sizing:border-box;border:1px solid #707070;border-radius:3px;box-shadow:inset 0 0 0 1px #fcfcfc, inset 0 0 0 2px rgba(255,255,255,.45);background:linear-gradient(#f2f2f2 0%,#ebebeb 48%,#dddddd 52%,#cfcfcf 100%);"></div>
<span id="t52" class="t" style="left:783.5px;transform:translateX(-50%);top:497px;font-size:11px;line-height:13px;color:#000;letter-spacing:-0.09px;">Supprimer le point de référence</span>
<span id="t53" class="t" style="left:699px;top:525px;font-size:11px;line-height:13px;color:#000;letter-spacing:-0.253px;">Numéro de couche</span>
<div style="left:795px;top:520px;width:55px;height:20px;box-sizing:border-box;border:1px solid #e3e9ef;border-top-color:#abadb3;border-left-color:#e2e3ea;border-right-color:#dbdfe6;background:#fff;"></div>
<div style="left:834px;top:522px;width:14px;height:9px;box-sizing:border-box;border:1px solid #96979c;box-shadow:inset 0 0 0 1px #fafafa;background:linear-gradient(#f6f6f6,#dcdcdc);"></div>
<div style="left:834px;top:530px;width:14px;height:8px;box-sizing:border-box;border:1px solid #96979c;box-shadow:inset 0 0 0 1px #fafafa;background:linear-gradient(#f6f6f6,#dcdcdc);"></div>
<svg style="left:837px;top:525px" width="7" height="3" viewBox="0 0 7 3" shape-rendering="crispEdges"><path d="M3 0h1v1h-1z" fill="#8d9ad0"/><path d="M2 0.5h3v0.5h-3zM1 1h5v1h-5zM0 2h7v1h-7z" fill="#6073bd"/></svg>
<svg style="left:837px;top:532px" width="7" height="3" viewBox="0 0 7 3" shape-rendering="crispEdges"><path d="M0 0h7v1h-7zM1 1h5v1h-5zM2 2h3v1h-3z" fill="#6073bd"/></svg>
<span id="t54" class="t" style="left:799px;top:525px;font-size:11px;line-height:13px;color:#000;letter-spacing:0px;">1</span>
<span id="t55" class="t" style="left:699.5px;top:551px;font-size:11px;line-height:13px;color:#000;letter-spacing:-0.051px;">Température</span>
<div style="left:795px;top:546px;width:55px;height:20px;box-sizing:border-box;border:1px solid #e3e9ef;border-top-color:#abadb3;border-left-color:#e2e3ea;border-right-color:#dbdfe6;background:#fff;"></div>
<div style="left:834px;top:548px;width:14px;height:9px;box-sizing:border-box;border:1px solid #96979c;box-shadow:inset 0 0 0 1px #fafafa;background:linear-gradient(#f6f6f6,#dcdcdc);"></div>
<div style="left:834px;top:556px;width:14px;height:8px;box-sizing:border-box;border:1px solid #96979c;box-shadow:inset 0 0 0 1px #fafafa;background:linear-gradient(#f6f6f6,#dcdcdc);"></div>
<svg style="left:837px;top:551px" width="7" height="3" viewBox="0 0 7 3" shape-rendering="crispEdges"><path d="M3 0h1v1h-1z" fill="#8d9ad0"/><path d="M2 0.5h3v0.5h-3zM1 1h5v1h-5zM0 2h7v1h-7z" fill="#6073bd"/></svg>
<svg style="left:837px;top:558px" width="7" height="3" viewBox="0 0 7 3" shape-rendering="crispEdges"><path d="M0 0h7v1h-7zM1 1h5v1h-5zM2 2h3v1h-3z" fill="#6073bd"/></svg>
<span id="t56" class="t" style="left:798.5px;top:551px;font-size:11px;line-height:13px;color:#000;letter-spacing:-0.353px;">200</span>
<span id="t57" class="t" style="left:856.5px;top:551px;font-size:11px;line-height:13px;color:#000;letter-spacing:-0.134px;">ºC</span>
<div style="left:26px;top:694px;width:118px;height:21px;box-sizing:border-box;border:1px solid #707070;border-radius:3px;box-shadow:inset 0 0 0 1px #fcfcfc, inset 0 0 0 2px rgba(255,255,255,.45);background:linear-gradient(#f2f2f2 0%,#ebebeb 48%,#dddddd 52%,#cfcfcf 100%);"></div>
<span id="t58" class="t" style="left:84.5px;transform:translateX(-50%);top:699px;font-size:11px;line-height:13px;color:#000;letter-spacing:-0.14px;">Masquer les avancés</span>
<div style="left:152px;top:694px;width:139px;height:21px;box-sizing:border-box;border:1px solid #707070;border-radius:3px;box-shadow:inset 0 0 0 1px #fcfcfc, inset 0 0 0 2px rgba(255,255,255,.45);background:linear-gradient(#f2f2f2 0%,#ebebeb 48%,#dddddd 52%,#cfcfcf 100%);"></div>
<span id="t59" class="t" style="left:221px;transform:translateX(-50%);top:699px;font-size:11px;line-height:13px;color:#000;letter-spacing:-0.187px;">Sélectionner des modèles</span>
<div style="left:786px;top:694px;width:73px;height:21px;box-sizing:border-box;border:1px solid #2e83b9;border-radius:3px;box-shadow:inset 0 0 0 1px #43d5fa, inset 0 0 0 2px rgba(255,255,255,.35);background:linear-gradient(#f0f5f8 0%,#e3edf3 48%,#cfdfe9 52%,#c0d5e1 100%);"></div>
<span id="t60" class="t" style="left:822px;transform:translateX(-50%);top:699px;font-size:11px;line-height:13px;color:#000;letter-spacing:-0.253px;">OK</span>
<div style="left:867px;top:694px;width:73px;height:21px;box-sizing:border-box;border:1px solid #707070;border-radius:3px;box-shadow:inset 0 0 0 1px #fcfcfc, inset 0 0 0 2px rgba(255,255,255,.45);background:linear-gradient(#f2f2f2 0%,#ebebeb 48%,#dddddd 52%,#cfcfcf 100%);"></div>
<span id="t61" class="t" style="left:903.5px;transform:translateX(-50%);top:699px;font-size:11px;line-height:13px;color:#000;letter-spacing:-0.132px;">Annuler</span>
</body></html>
